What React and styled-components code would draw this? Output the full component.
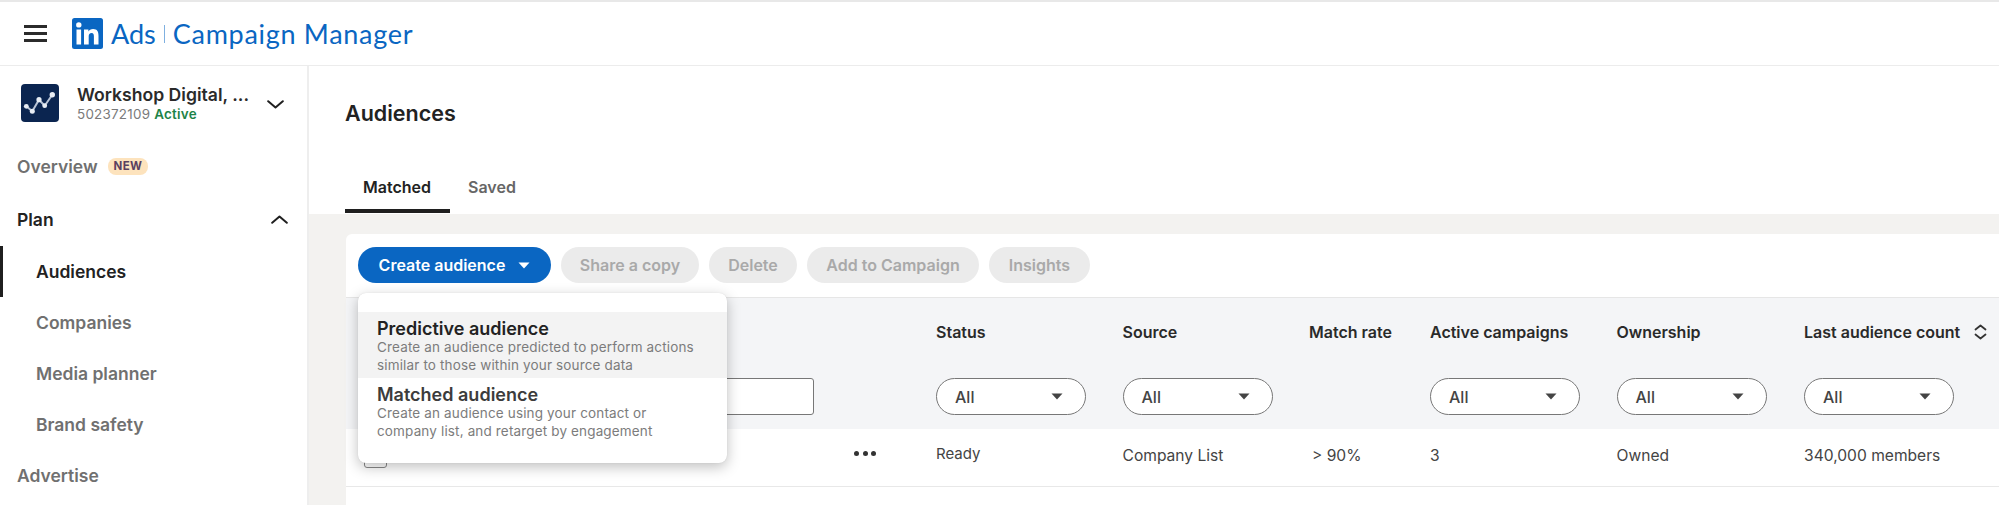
import React from "react";
import styled, { createGlobalStyle } from "styled-components";

const Global = createGlobalStyle`
  html, body { margin: 0; padding: 0; background: #fff; overflow: hidden; }
  body { font-family: Inter, "Liberation Sans", sans-serif; color: #1f1f1f; }
  * { box-sizing: border-box; }
`;
const Page = styled.div`
  width: 1999px; height: 505px; overflow: hidden; display: flex; flex-direction: column;
  border-top: 2px solid #e8e8e8;
`;
const TopBar = styled.header`
  height: 64px; flex: none; display: flex; align-items: center; padding-left: 24px;
  border-bottom: 1px solid #ececec;
`;
const Burger = styled.div`
  width: 23px; display: flex; flex-direction: column; gap: 4px; margin-right: 25px;
  span { display: block; height: 3px; background: #2b2b2b; }
`;
const Brand = styled.div`
  display: flex; align-items: center; color: #0a66c2; font-family: Lato, sans-serif; font-size: 27px; letter-spacing: .7px;
`;
const Ads = styled.span` margin-left: 8px; letter-spacing: 0; `;
const Sep = styled.span` width: 1px; height: 18px; background: #7fb0e0; margin: 0 8px 0 8px; `;
const Body = styled.div` flex: 1; display: flex; min-height: 0; `;
const Side = styled.aside`
  width: 309px; flex: none; border-right: 2px solid #eeeeee; display: flex; flex-direction: column;
`;
const Account = styled.div`
  height: 56px; flex: none; margin-top: 18px; padding-left: 21px; display: flex; align-items: flex-start;
`;
const AccName = styled.div` font-size: 17.6px; font-weight: 600; line-height: 20px; color: #2a2a2a; white-space: nowrap; `;
const AccMeta = styled.div` font-size: 13.4px; margin-top: 1px; line-height: 16px; color: #7a7a7a; letter-spacing: .25px; `;
const Active = styled.span` color: #1d8348; font-weight: 600; `;
const AccInfo = styled.div` margin-left: 18px; margin-top: 1px; width: 186px; `;
const AccChevron = styled.div` margin-left: 4px; margin-top: 16px; display: flex; `;
const NavItem = styled.div`
  height: ${p => p.$h || 51}px; flex: none; display: flex; align-items: center; justify-content: space-between;
  padding: 0 19px 0 ${p => (p.$sub ? 36 : 17)}px; font-size: 17.5px; font-weight: 600;
  color: ${p => (p.$dark ? "#222" : "#707070")};
  position: relative;
`;
const Bar = styled.i` position: absolute; left: 0; top: 0; bottom: 0; width: 3px; background: #1f1f1f; `;
const NavLabel = styled.span` display: flex; align-items: center; gap: 10px; `;
const NewBadge = styled.span`
  font-size: 11.5px; font-weight: 700; letter-spacing: .3px; color: #5a4060; background: #fde3bd; border-radius: 8px;
  padding: 0 6px; height: 17px; line-height: 17px;
`;
const Main = styled.main` flex: 1; min-width: 0; display: flex; flex-direction: column; `;
const Head = styled.div` height: 148px; flex: none; padding: 0 0 0 36px; display: flex; flex-direction: column; `;
const Title = styled.h1` margin: 33px 0 0; font-size: 21.5px; line-height: 28px; font-weight: 600; color: #222; height: 28px; `;
const Tabs = styled.div` display: flex; margin-top: 39px; height: 47px; `;
const Tab = styled.div`
  height: 47px; padding: 0 19px 2px 18px; font-size: 16px; font-weight: 600; display: flex; align-items: center;
  color: ${p => (p.$on ? "#222" : "#666")};
  border-bottom: 4px solid ${p => (p.$on ? "#1f1f1f" : "transparent")};
`;
const Canvas = styled.div` flex: 1; min-height: 0; background: #f3f2f0; padding: 20px 0 0 37px; `;
const Card = styled.div` background: #fff; height: 300px; border-radius: 6px 0 0 0; position: relative; `;
const Toolbar = styled.div` height: 64px; display: flex; gap: 10px; padding: 13px 0 0 12px; border-bottom: 1px solid #e6e6e6; `;
const Btn = styled.div`
  height: 36px; width: ${p => p.$w}px; border-radius: 18px; display: flex; align-items: center; justify-content: center; gap: 13px;
  font-size: 16px; font-weight: 600; white-space: nowrap;
  background: ${p => (p.$primary ? "#0a66c2" : "#ebebeb")};
  color: ${p => (p.$primary ? "#fff" : "#a9a9a9")};
`;
const GRID = "590px 186.5px 186.5px 121px 186.5px 187.5px 1fr";
const HeadRow = styled.div`
  height: 131px; background: #f4f5f7; display: grid; grid-template-columns: ${GRID}; grid-template-rows: 67px 37px; row-gap: 13px;
`;
const ColHead = styled.div`
  font-size: 16px; font-weight: 600; color: #2a2a2a; display: flex; align-items: center; gap: 14px; white-space: nowrap; padding-top: 1px;
`;
const FilterCell = styled.div` display: flex; align-items: center; `;
const SearchBox = styled.div` width: 456px; margin-left: 12px; height: 37px; border: 1px solid #777; border-radius: 3px; background: #fff; `;
const Select = styled.div`
  width: 150px; height: 37px; border: 1px solid #777; border-radius: 19px; background: #fff;
  display: flex; align-items: center; justify-content: space-between; padding: 0 22px 0 18px; font-size: 16px; font-weight: 500; color: #444;
`;
const DataRow = styled.div`
  height: 58px; display: grid; grid-template-columns: ${GRID}; border-bottom: 1px solid #e8e8e8; align-items: center; font-size: 15.6px; color: #444; padding-bottom: 5px;
`;
const NameCell = styled.div` align-self: start; height: 52px; display: flex; align-items: flex-start; justify-content: space-between; padding: 0 60px 0 18px; `;
const Checkbox = styled.div` width: 23px; height: 23px; margin-top: 16px; border: 1.5px solid #888; border-radius: 3px; `;
const Dots = styled.div` display: flex; gap: 3.5px; margin-top: 22px; span { width: 5px; height: 5px; background: #333; border-radius: 50%; } `;
const ReadyCell = styled.div` margin-top: -4px; font-size: 15px; `;
const Match = styled.div` padding-left: 3px; `;
const Menu = styled.div`
  position: absolute; left: 12px; top: 59px; width: 369px; height: 170px; background: #fff; border-radius: 8px; padding-top: 19px;
  box-shadow: 0 4px 14px rgba(0,0,0,.25), 0 0 1px rgba(0,0,0,.15);
`;
const MenuItem = styled.div`
  height: 66px; padding: 6px 19px 0; background: ${p => (p.$hover ? "#f3f3f3" : "#fff")};
`;
const MenuTitle = styled.div` font-size: 18px; font-weight: 600; line-height: 21px; color: ${p => (p.$hover ? "#222" : "#3c3c3c")}; `;
const MenuText = styled.div` font-size: 13.5px; line-height: 18px; color: #7c7c7c; letter-spacing: .15px; margin-top: -1px; white-space: pre-line; `;

const Caret = ({ c = "#444" }) => (
  <svg width="12" height="7" viewBox="0 0 12 7"><path d="M0.5 0.5h11L6 6.5z" fill={c} /></svg>
);
const Chev = ({ up }) => (
  <svg width="17" height="9" viewBox="0 0 17 9" fill="none" stroke="#1f1f1f" strokeWidth="2" strokeLinecap="round" strokeLinejoin="round">
    <path d={up ? "M1.2 7.8 8.5 1.6l7.3 6.2" : "M1.2 1.2 8.5 7.4l7.3-6.2"} />
  </svg>
);

export default function App() {
  return (
    <Page>
      <Global />
      <TopBar>
        <Burger><span /><span /><span /></Burger>
        <Brand>
          <svg width="31" height="31" viewBox="0 0 31 31">
            <rect width="31" height="31" rx="2.5" fill="#0a66c2" />
            <rect x="4.5" y="11.5" width="4.6" height="15" fill="#fff" />
            <circle cx="6.8" cy="6.9" r="2.7" fill="#fff" />
            <path d="M12 11.5h4.4v2.1c.8-1.3 2.4-2.5 4.7-2.5 4.3 0 5.4 2.8 5.4 6.6v8.8h-4.6v-7.9c0-2-.4-3.5-2.3-3.5-2.1 0-2.9 1.5-2.9 3.5v7.9H12z" fill="#fff" />
          </svg>
          <Ads>Ads</Ads><Sep /><span>Campaign Manager</span>
        </Brand>
      </TopBar>
      <Body>
        <Side>
          <Account>
            <svg width="38" height="38" viewBox="0 0 38 38">
              <rect width="38" height="38" rx="4" fill="#0b2550" />
              <path d="M5.3 22.3 11.3 27.3 18 15.7 23.7 21.7 31.3 10.7" fill="none" stroke="#b9c4d6" strokeWidth="2" />
              <g fill="#e8edf4">
                <circle cx="5.3" cy="22.3" r="2.4" /><circle cx="11.3" cy="27.3" r="2.5" /><circle cx="18" cy="15.7" r="2.6" />
                <circle cx="23.7" cy="21.7" r="2.4" /><circle cx="31.3" cy="10.7" r="2.7" />
              </g>
            </svg>
            <AccInfo>
              <AccName>Workshop Digital, ...</AccName>
              <AccMeta>502372109 <Active>Active</Active></AccMeta>
            </AccInfo>
            <AccChevron><Chev /></AccChevron>
          </Account>
          <NavItem $h={52}><NavLabel>Overview <NewBadge>NEW</NewBadge></NavLabel></NavItem>
          <NavItem $h={54} $dark>Plan <Chev up /></NavItem>
          <NavItem $sub $dark><Bar />Audiences</NavItem>
          <NavItem $sub>Companies</NavItem>
          <NavItem $sub>Media planner</NavItem>
          <NavItem $sub>Brand safety</NavItem>
          <NavItem>Advertise</NavItem>
        </Side>
        <Main>
          <Head>
            <Title>Audiences</Title>
            <Tabs>
              <Tab $on>Matched</Tab>
              <Tab>Saved</Tab>
            </Tabs>
          </Head>
          <Canvas>
            <Card>
              <Toolbar>
                <Btn $primary $w={193}>Create audience <Caret c="#fff" /></Btn>
                <Btn $w={138}>Share a copy</Btn>
                <Btn $w={88}>Delete</Btn>
                <Btn $w={172}>Add to Campaign</Btn>
                <Btn $w={101}>Insights</Btn>
              </Toolbar>
              <HeadRow>
                <div />
                <ColHead>Status</ColHead>
                <ColHead>Source</ColHead>
                <ColHead>Match rate</ColHead>
                <ColHead>Active campaigns</ColHead>
                <ColHead>Ownership</ColHead>
                <ColHead>Last audience count
                  <svg width="13" height="16" viewBox="0 0 13 16" fill="none" stroke="#333" strokeWidth="1.8" strokeLinecap="round" strokeLinejoin="round">
                    <path d="M1.5 5.5 6.5 1.5l5 4M1.5 10.5l5 4 5-4" />
                  </svg>
                </ColHead>
                <FilterCell><SearchBox /></FilterCell>
                <FilterCell><Select>All <Caret /></Select></FilterCell>
                <FilterCell><Select>All <Caret /></Select></FilterCell>
                <div />
                <FilterCell><Select>All <Caret /></Select></FilterCell>
                <FilterCell><Select>All <Caret /></Select></FilterCell>
                <FilterCell><Select>All <Caret /></Select></FilterCell>
              </HeadRow>
              <DataRow>
                <NameCell><Checkbox /><Dots><span /><span /><span /></Dots></NameCell>
                <ReadyCell>Ready</ReadyCell>
                <div>Company List</div>
                <Match>&gt; 90%</Match>
                <div>3</div>
                <div>Owned</div>
                <div>340,000 members</div>
              </DataRow>
              <Menu>
                <MenuItem $hover>
                  <MenuTitle $hover>Predictive audience</MenuTitle>
                  <MenuText>{"Create an audience predicted to perform actions\nsimilar to those within your source data"}</MenuText>
                </MenuItem>
                <MenuItem>
                  <MenuTitle>Matched audience</MenuTitle>
                  <MenuText>{"Create an audience using your contact or\ncompany list, and retarget by engagement"}</MenuText>
                </MenuItem>
              </Menu>
            </Card>
          </Canvas>
        </Main>
      </Body>
    </Page>
  );
}
